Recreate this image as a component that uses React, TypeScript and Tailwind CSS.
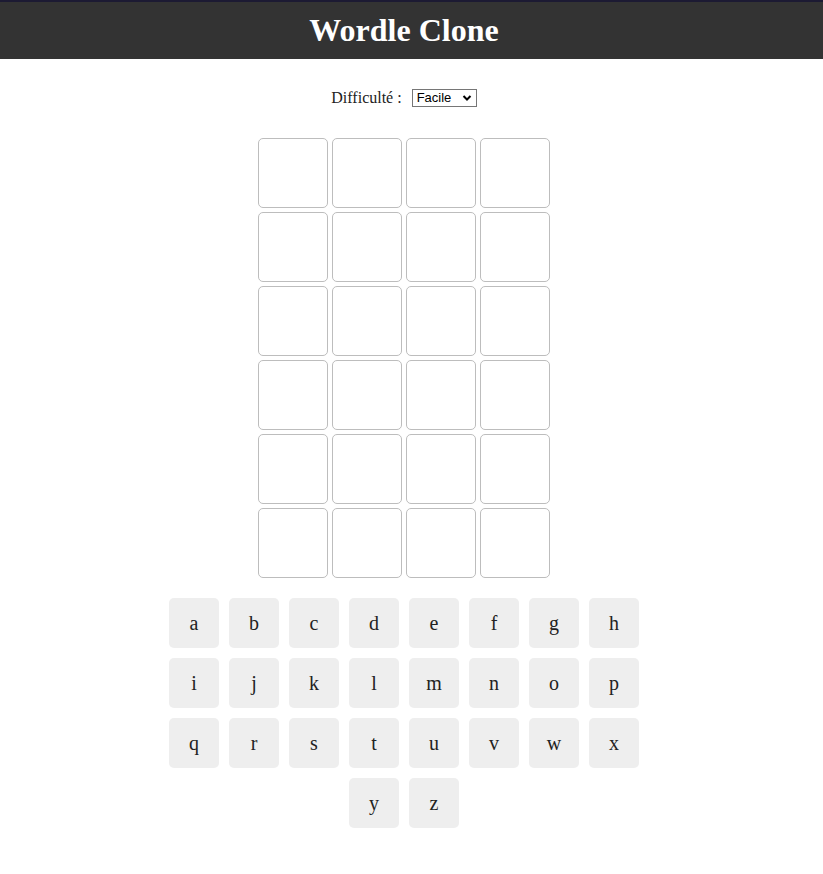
import React from "react";

const rows = [
  ["a", "b", "c", "d", "e", "f", "g", "h"],
  ["i", "j", "k", "l", "m", "n", "o", "p"],
  ["q", "r", "s", "t", "u", "v", "w", "x"],
  ["y", "z"],
];

export default function App() {
  return (
    <div className="min-h-[874px] bg-white" style={{ fontFamily: '"Liberation Serif", "Times New Roman", serif' }}>
      <header className="h-[59px] bg-[#333333] border-t-2 border-[#1c1a33] flex items-center justify-center pr-[15px] pb-[2px]">
        <h1 className="text-[32px] font-bold text-white leading-none">Wordle Clone</h1>
      </header>
      <div className="pr-[15px] flex flex-col items-center">
        <div className="mt-[29px] flex items-center h-[20px] leading-[20px] text-[16px] text-[#222]">
          <span>Difficulté :</span>
          <div className="relative ml-[10px] w-[65px] h-[18px]">
            <select
              className="block appearance-none w-full h-[18px] border border-[#767676] bg-white pl-[4px] py-0 text-[13px] text-black leading-[16px] rounded-none"
              style={{ fontFamily: '"Liberation Sans", Arial, sans-serif' }}
              defaultValue="facile"
            >
              <option value="facile">Facile</option>
              <option value="moyen">Moyen</option>
              <option value="difficile">Difficile</option>
            </select>
            <svg className="absolute right-[5px] top-[5px] pointer-events-none" width="10" height="8" viewBox="0 0 10 8">
              <path d="M1.5 2 L5 5.5 L8.5 2" stroke="#000" strokeWidth="2" fill="none" />
            </svg>
          </div>
        </div>
        <div className="mt-[30px] grid grid-cols-4 gap-[4px]">
          {Array.from({ length: 24 }).map((_, i) => (
            <div key={i} className="w-[70px] h-[70px] border border-[#bdbdbd] rounded-[5px] bg-white" />
          ))}
        </div>
        <div className="mt-[20px] flex flex-col items-center gap-[10px]">
          {rows.map((r, ri) => (
            <div key={ri} className="flex gap-[10px]">
              {r.map((k) => (
                <div
                  key={k}
                  className="w-[50px] h-[50px] rounded-[5px] bg-[#eeeeee] flex items-center justify-center text-[20px] text-[#222]"
                >
                  {k}
                </div>
              ))}
            </div>
          ))}
        </div>
      </div>
    </div>
  );
}
